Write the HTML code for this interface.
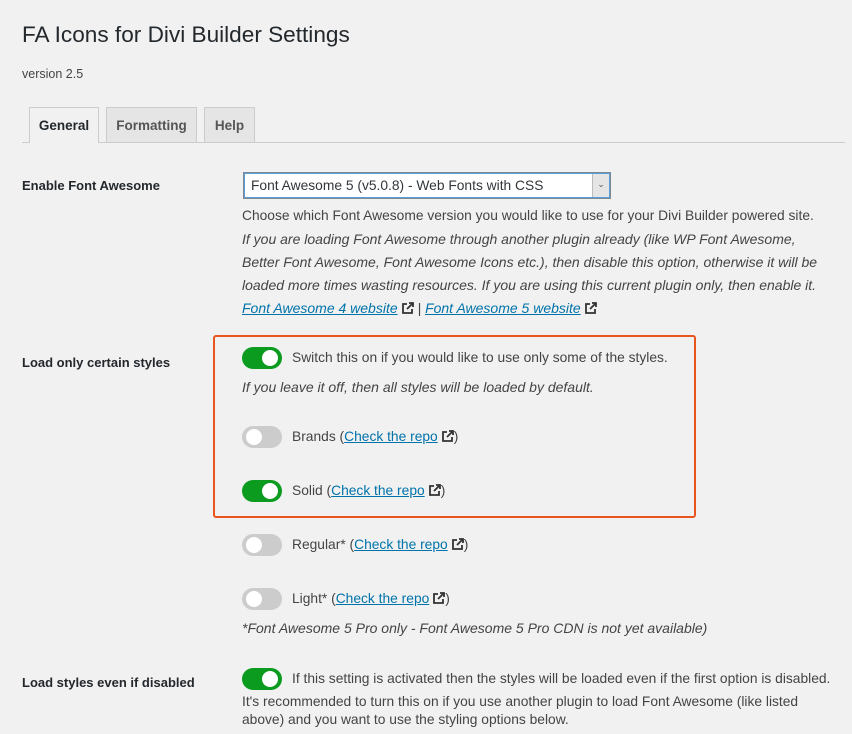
<!DOCTYPE html>
<html><head><style>
body{margin:0;width:852px;height:734px;background:#f1f1f1;font-family:"Liberation Sans",sans-serif;color:#23282d;font-size:13.8px;position:relative;overflow:hidden}
.a{position:absolute;white-space:nowrap}
.lbl{font-weight:bold;font-size:13px;color:#23282d}
.d{color:#444;font-size:13.8px}
.i{font-style:italic;color:#444;font-size:14px}
a{color:#0073aa;text-decoration:underline}
.tab{position:absolute;top:107px;height:35px;border:1px solid #ccc;border-bottom:none;background:#e5e5e5;color:#555;font-weight:bold;font-size:13.5px;text-align:center;line-height:36px;box-sizing:border-box}
.tg{position:absolute;left:242px;width:40px;height:22px;border-radius:11px;background:#ccc}
.tg::after{content:"";position:absolute;top:3px;left:4px;width:16px;height:16px;border-radius:50%;background:#fff}
.tg.on{background:#0a9b1f}
.tg.on::after{left:20px}
.ic{display:inline-block;width:12px;height:12px;vertical-align:-1px;margin-left:4px}
</style></head><body>
<div class="a" style="left:22px;top:22px;font-size:22.6px;color:#23282d">FA Icons for Divi Builder Settings</div>
<div class="a" style="left:22px;top:67px;font-size:12.5px;color:#444">version 2.5</div>
<div class="a" style="left:22px;top:142px;width:823px;border-top:1px solid #ccc"></div>
<div class="tab" style="left:29px;width:70px;background:#f1f1f1;color:#23282d;height:36px">General</div>
<div class="tab" style="left:106px;width:91px">Formatting</div>
<div class="tab" style="left:204px;width:51px">Help</div>

<div class="a lbl" style="left:22px;top:178px">Enable Font Awesome</div>
<div class="a" style="left:243px;top:172px;width:368px;height:27px;border:1px solid #7e8993;background:#fff;box-sizing:border-box;box-shadow:0 0 0 1px #5b9dd9 inset">
<span class="a" style="left:7px;top:5px;font-size:13.8px;color:#32373c">Font Awesome 5 (v5.0.8) - Web Fonts with CSS</span>
<span class="a" style="right:1px;top:1px;width:16px;height:23px;background:#e5e5e5;border-left:1px solid #bbb;font-size:9px;text-align:center;line-height:21px;color:#555">&#8964;</span></div>
<div class="a d" style="left:242px;top:208px">Choose which Font Awesome version you would like to use for your Divi Builder powered site.</div>
<div class="a i" style="left:242px;top:231px">If you are loading Font Awesome through another plugin already (like WP Font Awesome,</div>
<div class="a i" style="left:242px;top:254px">Better Font Awesome, Font Awesome Icons etc.), then disable this option, otherwise it will be</div>
<div class="a i" style="left:242px;top:277px">loaded more times wasting resources. If you are using this current plugin only, then enable it.</div>
<div class="a i" style="left:242px;top:300px"><a>Font Awesome 4 website</a><svg class="ic" viewBox="0 0 12 12"><path d="M5 2H1v9h9V7" fill="none" stroke="#333" stroke-width="1.8"/><path d="M7 1h4v4M11 1L5 7" fill="none" stroke="#333" stroke-width="1.8"/></svg> | <a>Font Awesome 5 website</a><svg class="ic" viewBox="0 0 12 12"><path d="M5 2H1v9h9V7" fill="none" stroke="#333" stroke-width="1.8"/><path d="M7 1h4v4M11 1L5 7" fill="none" stroke="#333" stroke-width="1.8"/></svg></div>

<div class="a lbl" style="left:22px;top:355px">Load only certain styles</div>
<div class="a" style="left:213px;top:335px;width:483px;height:183px;border:2px solid #e8561e;border-radius:3px;box-sizing:border-box"></div>
<div class="tg on" style="top:347px"></div>
<div class="a d" style="left:292px;top:350px">Switch this on if you would like to use only some of the styles.</div>
<div class="a i" style="left:242px;top:379px">If you leave it off, then all styles will be loaded by default.</div>
<div class="tg" style="top:426px"></div>
<div class="a d" style="left:292px;top:429px">Brands (<a>Check the repo</a><svg class="ic" viewBox="0 0 12 12"><path d="M5 2H1v9h9V7" fill="none" stroke="#333" stroke-width="1.8"/><path d="M7 1h4v4M11 1L5 7" fill="none" stroke="#333" stroke-width="1.8"/></svg>)</div>
<div class="tg on" style="top:480px"></div>
<div class="a d" style="left:292px;top:483px">Solid (<a>Check the repo</a><svg class="ic" viewBox="0 0 12 12"><path d="M5 2H1v9h9V7" fill="none" stroke="#333" stroke-width="1.8"/><path d="M7 1h4v4M11 1L5 7" fill="none" stroke="#333" stroke-width="1.8"/></svg>)</div>
<div class="tg" style="top:534px"></div>
<div class="a d" style="left:292px;top:537px">Regular* (<a>Check the repo</a><svg class="ic" viewBox="0 0 12 12"><path d="M5 2H1v9h9V7" fill="none" stroke="#333" stroke-width="1.8"/><path d="M7 1h4v4M11 1L5 7" fill="none" stroke="#333" stroke-width="1.8"/></svg>)</div>
<div class="tg" style="top:588px"></div>
<div class="a d" style="left:292px;top:591px">Light* (<a>Check the repo</a><svg class="ic" viewBox="0 0 12 12"><path d="M5 2H1v9h9V7" fill="none" stroke="#333" stroke-width="1.8"/><path d="M7 1h4v4M11 1L5 7" fill="none" stroke="#333" stroke-width="1.8"/></svg>)</div>
<div class="a i" style="left:242px;top:620px">*Font Awesome 5 Pro only - Font Awesome 5 Pro CDN is not yet available)</div>

<div class="a lbl" style="left:22px;top:675px">Load styles even if disabled</div>
<div class="tg on" style="top:668px"></div>
<div class="a d" style="left:292px;top:671px">If this setting is activated then the styles will be loaded even if the first option is disabled.</div>
<div class="a d" style="left:242px;top:694px">It's recommended to turn this on if you use another plugin to load Font Awesome (like listed</div>
<div class="a d" style="left:242px;top:712px">above) and you want to use the styling options below.</div>
</body></html>
